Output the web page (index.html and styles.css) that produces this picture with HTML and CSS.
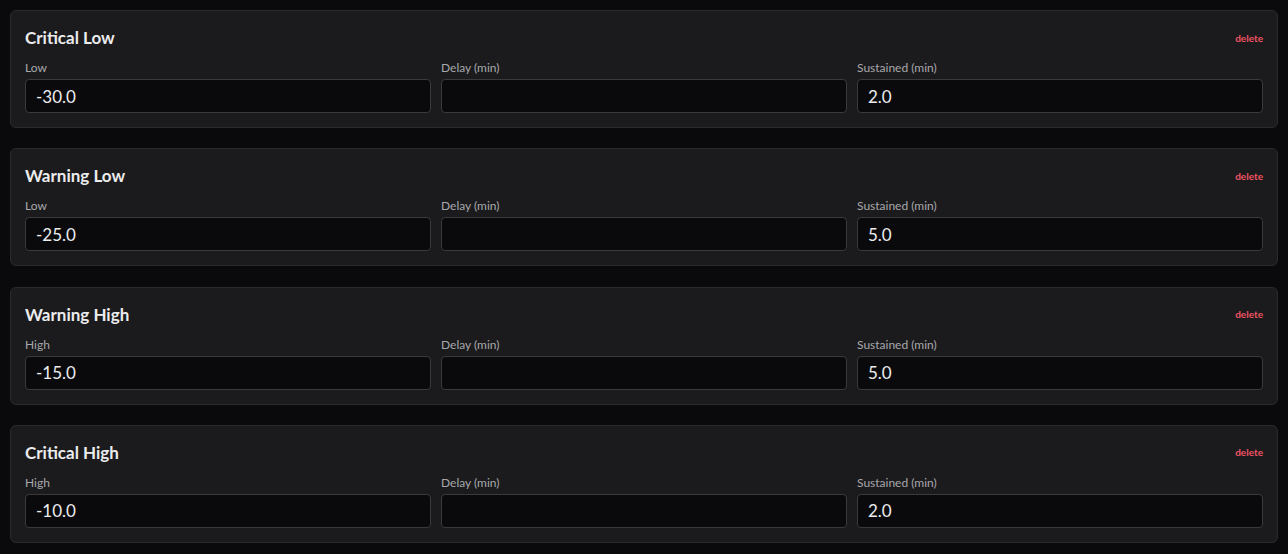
FILE: index.html
```html
<!DOCTYPE html>
<html lang="en">
<head>
    <meta charset="UTF-8">
    <meta name="viewport" content="width=device-width, initial-scale=1.0">
    <title>Thresholds</title>
    <link rel="stylesheet" href="styles.css">
</head>
<body>

    <section class="threshold-list">

        <div class="threshold-card">
            <div class="threshold-header">
                <h2>Critical Low</h2>
                <button class="delete-btn">delete</button>
            </div>
            <div class="threshold-fields">
                <label class="field">
                    <span>Low</span>
                    <input type="text" value="-30.0">
                </label>
                <label class="field">
                    <span>Delay (min)</span>
                    <input type="text" value="">
                </label>
                <label class="field">
                    <span>Sustained (min)</span>
                    <input type="text" value="2.0">
                </label>
            </div>
        </div>

        <div class="threshold-card">
            <div class="threshold-header">
                <h2>Warning Low</h2>
                <button class="delete-btn">delete</button>
            </div>
            <div class="threshold-fields">
                <label class="field">
                    <span>Low</span>
                    <input type="text" value="-25.0">
                </label>
                <label class="field">
                    <span>Delay (min)</span>
                    <input type="text" value="">
                </label>
                <label class="field">
                    <span>Sustained (min)</span>
                    <input type="text" value="5.0">
                </label>
            </div>
        </div>

        <div class="threshold-card">
            <div class="threshold-header">
                <h2>Warning High</h2>
                <button class="delete-btn">delete</button>
            </div>
            <div class="threshold-fields">
                <label class="field">
                    <span>High</span>
                    <input type="text" value="-15.0">
                </label>
                <label class="field">
                    <span>Delay (min)</span>
                    <input type="text" value="">
                </label>
                <label class="field">
                    <span>Sustained (min)</span>
                    <input type="text" value="5.0">
                </label>
            </div>
        </div>

        <div class="threshold-card">
            <div class="threshold-header">
                <h2>Critical High</h2>
                <button class="delete-btn">delete</button>
            </div>
            <div class="threshold-fields">
                <label class="field">
                    <span>High</span>
                    <input type="text" value="-10.0">
                </label>
                <label class="field">
                    <span>Delay (min)</span>
                    <input type="text" value="">
                </label>
                <label class="field">
                    <span>Sustained (min)</span>
                    <input type="text" value="2.0">
                </label>
            </div>
        </div>

    </section>

</body>
</html>
```

FILE: styles.css
```css
body {
    margin: 0;
    padding: 10px;
    background-color: #0a0a0c;
    font-family: 'Lato', 'Noto Sans', sans-serif;
    color: #e8e8ea;
}

.threshold-list {
    display: flex;
    flex-direction: column;
    gap: 20.33px;
}

.threshold-card {
    background-color: #1b1b1d;
    border: 1px solid #2b2b2e;
    border-radius: 6px;
    padding: 14px;
}

.threshold-header {
    display: flex;
    justify-content: space-between;
    align-items: center;
    height: 25px;
    margin-bottom: 10px;
}

.threshold-header h2 {
    margin: 0;
    font-size: 17px;
    font-weight: 700;
    color: #ececee;
}

.delete-btn {
    background: none;
    border: none;
    padding: 0;
    font-family: inherit;
    font-size: 10px;
    font-weight: 700;
    color: #f05464;
    cursor: pointer;
}

.threshold-fields {
    display: grid;
    grid-template-columns: 1fr 1fr 1fr;
    gap: 10px;
}

.field {
    display: flex;
    flex-direction: column;
    gap: 3px;
}

.field span {
    font-size: 12px;
    line-height: 16px;
    color: #a8a8ac;
}

.field input {
    box-sizing: border-box;
    height: 34px;
    width: 100%;
    padding: 0 10px;
    background-color: #0a0a0c;
    border: 1px solid #3a3a3d;
    border-radius: 4px;
    font-family: inherit;
    font-size: 17px;
    color: #ececee;
}
```
